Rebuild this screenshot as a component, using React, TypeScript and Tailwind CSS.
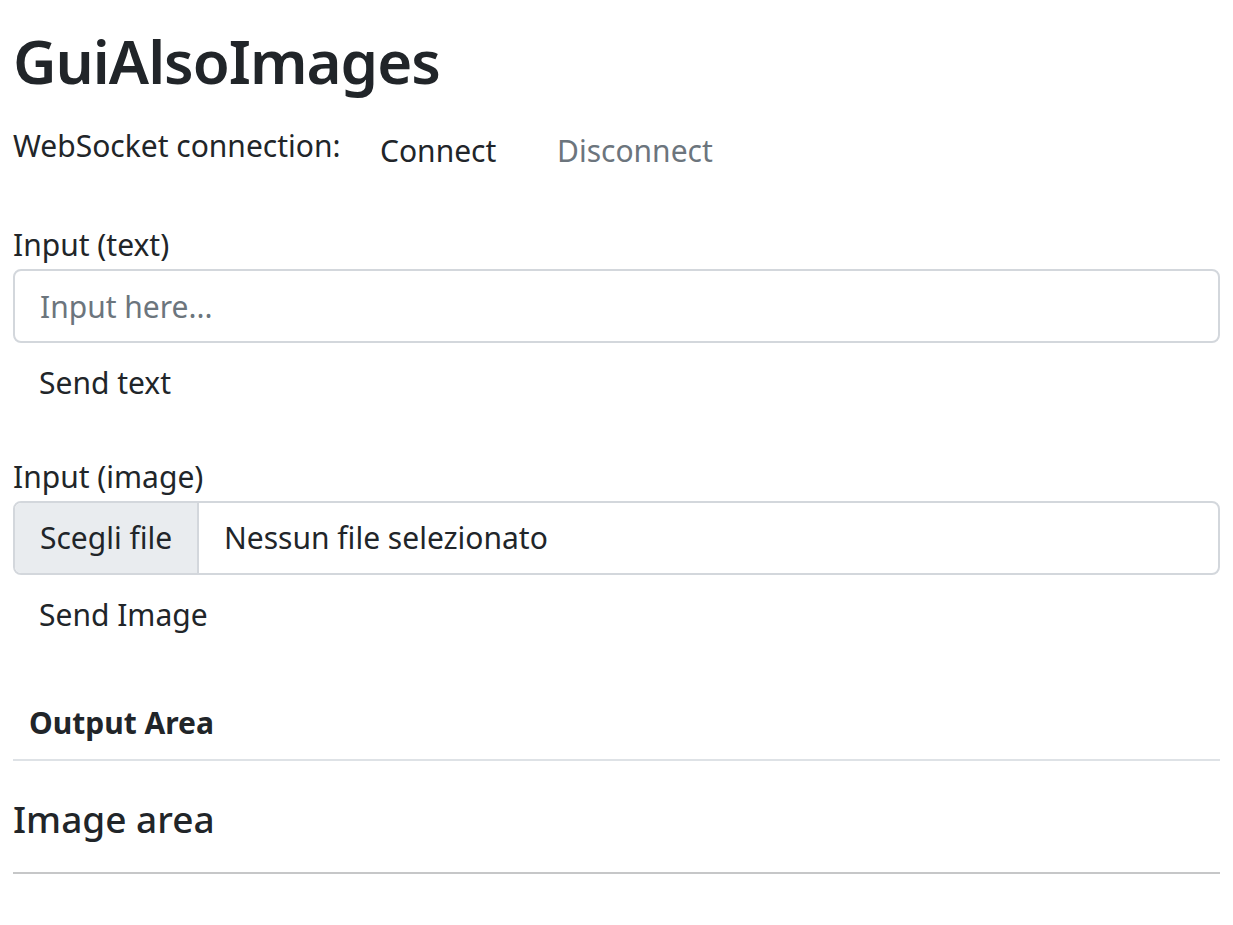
import { useState } from "react";

export default function App() {
  const [text, setText] = useState("");
  const [connected, setConnected] = useState(false);

  return (
    <main
      className="px-[13px] pt-[23px] text-[#212529] bg-white min-h-[925px]"
      style={{ fontFamily: '"Noto Sans", "Open Sans", sans-serif' }}
    >
      <h1 className="text-[60px] leading-[77px] font-semibold tracking-[-1px]">GuiAlsoImages</h1>

      {/* Connection controls */}
      <div className="flex items-start mt-[13px] whitespace-nowrap">
        <span className="shrink-0 w-[341px] pt-[9px] text-[30px] leading-[48px]">WebSocket connection:</span>
        <button
          type="button"
          onClick={() => setConnected(true)}
          className="shrink-0 w-[177px] text-left px-[26px] py-[14px] text-[30px] leading-[48px] text-[#212529]"
        >
          Connect
        </button>
        <button
          type="button"
          disabled={!connected}
          onClick={() => setConnected(false)}
          className="px-[26px] py-[14px] text-[30px] leading-[48px] text-[#6c757d]"
        >
          Disconnect
        </button>
      </div>

      {/* Text input */}
      <div className="mt-[32px]">
        <label className="block text-[30px] leading-[48px]">Input (text)</label>
        <input
          value={text}
          onChange={(e) => setText(e.target.value)}
          placeholder="Input here..."
          className="block w-full h-[74px] px-[25px] border-2 border-[#d3d7dc] rounded-[8px] text-[30px] leading-[48px] placeholder:text-[#6c757d] outline-none"
        />
        <button type="button" className="px-[26px] py-[14px] mt-[2px] text-[30px] leading-[48px]">
          Send text
        </button>
      </div>

      {/* Image input */}
      <div className="mt-[32px]">
        <label className="block text-[30px] leading-[48px]">Input (image)</label>
        <div className="flex h-[74px] border-2 border-[#d3d7dc] rounded-[8px] overflow-hidden text-[30px] leading-[48px]">
          <span className="flex items-center w-[184px] pl-[25px] bg-[#e9ecef] border-r-2 border-[#d3d7dc]">
            Scegli file
          </span>
          <span className="flex items-center pl-[25px]">Nessun file selezionato</span>
        </div>
        <button type="button" className="px-[26px] py-[14px] mt-[2px] text-[30px] leading-[48px]">
          Send Image
        </button>
      </div>

      {/* Output */}
      <table className="w-full mt-[26px]">
        <thead>
          <tr className="border-b-2 border-[#dee2e6]">
            <th className="text-left px-[16px] pt-[20px] pb-[12px] text-[30px] leading-[48px] font-bold">Output Area</th>
          </tr>
        </thead>
      </table>

      <h4 className="mt-[34px] text-[37px] leading-[48px] font-medium">Image area</h4>
      <hr className="mt-[29px] border-t-2 border-[#c6c7c8]" />
    </main>
  );
}
